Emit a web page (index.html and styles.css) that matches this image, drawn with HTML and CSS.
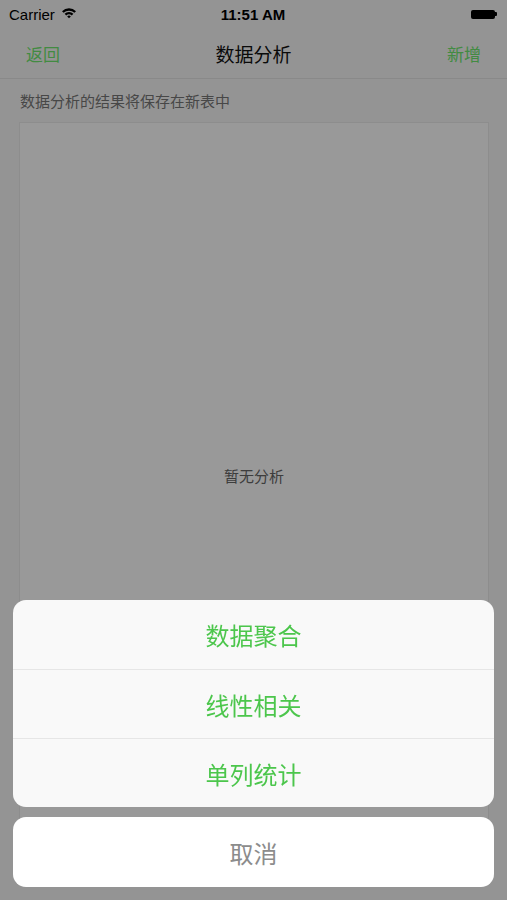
FILE: index.html
```html
<!DOCTYPE html>
<html lang="zh-CN">
<head>
    <meta charset="UTF-8">
    <meta name="viewport" content="width=device-width, initial-scale=1.0">
    <title>数据分析</title>
    <link rel="stylesheet" href="styles.css">
</head>
<body>
    <div class="status-bar">
        <div class="carrier">
            Carrier
            <svg class="wifi" width="16" height="12" viewBox="0 0 16 12">
                <path d="M1 4.2 A10 10 0 0 1 15 4.2 L13.4 5.8 A7.8 7.8 0 0 0 2.6 5.8 Z" fill="#000"/>
                <path d="M3.6 6.8 A6.4 6.4 0 0 1 12.4 6.8 L10.8 8.4 A4.2 4.2 0 0 0 5.2 8.4 Z" fill="#000"/>
                <path d="M6.2 9.4 A2.6 2.6 0 0 1 9.8 9.4 L8 11.3 Z" fill="#000"/>
            </svg>
        </div>
        <div class="clock">11:51 AM</div>
        <div class="battery">
            <span class="battery-body"></span>
            <span class="battery-nub"></span>
        </div>
    </div>
    <header class="nav-bar">
        <a class="nav-btn" href="#">返回</a>
        <h1 class="nav-title">数据分析</h1>
        <a class="nav-btn" href="#">新增</a>
    </header>
    <main class="content">
        <p class="hint">数据分析的结果将保存在新表中</p>
        <div class="result-card">
            <span class="empty">暂无分析</span>
        </div>
    </main>

    <!-- action sheet over a dimmed page -->
    <div class="mask">
        <div class="sheet">
            <div class="sheet-group">
                <button class="sheet-item">数据聚合</button>
                <button class="sheet-item">线性相关</button>
                <button class="sheet-item">单列统计</button>
            </div>
            <button class="sheet-cancel">取消</button>
        </div>
    </div>
</body>
</html>
```

FILE: styles.css
```css
body {
    margin: 0;
    font-family: "Liberation Sans", "Noto Sans CJK SC", sans-serif;
    background-color: #f7f7f7;
    color: #000;
    height: 900px;
    overflow: hidden;
}
.status-bar {
    height: 28px;
    display: flex;
    align-items: center;
    justify-content: space-between;
    padding: 0 10px 0 9px;
    font-size: 15px;
}
.carrier {
    display: flex;
    align-items: center;
    gap: 6px;
    width: 120px;
}
.wifi {
    margin-top: -2px;
}
.clock {
    font-weight: bold;
}
.battery {
    width: 120px;
    display: flex;
    justify-content: flex-end;
    align-items: center;
}
.battery-body {
    width: 24px;
    height: 9px;
    background-color: #000;
    border-radius: 2px;
}
.battery-nub {
    width: 2px;
    height: 4px;
    background-color: #000;
    border-radius: 0 1px 1px 0;
}
.nav-bar {
    height: 50px;
    display: flex;
    align-items: center;
    justify-content: space-between;
    padding: 0 26px;
    border-bottom: 1px solid #e4e4e4;
    font-family: "Noto Sans CJK SC", sans-serif;
}
.nav-btn {
    color: #6ee86e;
    text-decoration: none;
    font-size: 17px;
}
.nav-title {
    margin: 0;
    font-size: 19px;
    font-weight: normal;
    color: #111;
}
.content {
    padding: 0 18px 0 19px;
    font-family: "Noto Sans CJK SC", sans-serif;
}
.hint {
    margin: 12px 0 11px 1px;
    font-size: 15px;
    line-height: 20px;
    color: #777;
}
.result-card {
    height: 706px;
    display: flex;
    align-items: center;
    justify-content: center;
    background-color: #fff;
    border: 1px solid #ebebeb;
    box-sizing: border-box;
}
.empty {
    font-size: 15px;
    color: #666;
}
.mask {
    position: fixed;
    inset: 0;
    background-color: rgba(0, 0, 0, 0.4);
    display: flex;
    flex-direction: column;
    justify-content: flex-end;
}
.sheet {
    padding: 0 13px 13px;
    display: flex;
    flex-direction: column;
    gap: 10px;
}
.sheet-group {
    background-color: #f9f9f9;
    border-radius: 13px;
    overflow: hidden;
    display: flex;
    flex-direction: column;
}
.sheet-item,
.sheet-cancel {
    height: 69px;
    border: none;
    margin: 0;
    padding: 0;
    font-family: "Noto Sans CJK SC", sans-serif;
    font-size: 24px;
    background: none;
}
.sheet-item {
    color: #4cc64c;
    border-top: 1px solid #e6e6e6;
}
.sheet-item:first-child {
    border-top: none;
}
.sheet-cancel {
    height: 70px;
    background-color: #fff;
    border-radius: 13px;
    color: #8c8c8c;
}
```
